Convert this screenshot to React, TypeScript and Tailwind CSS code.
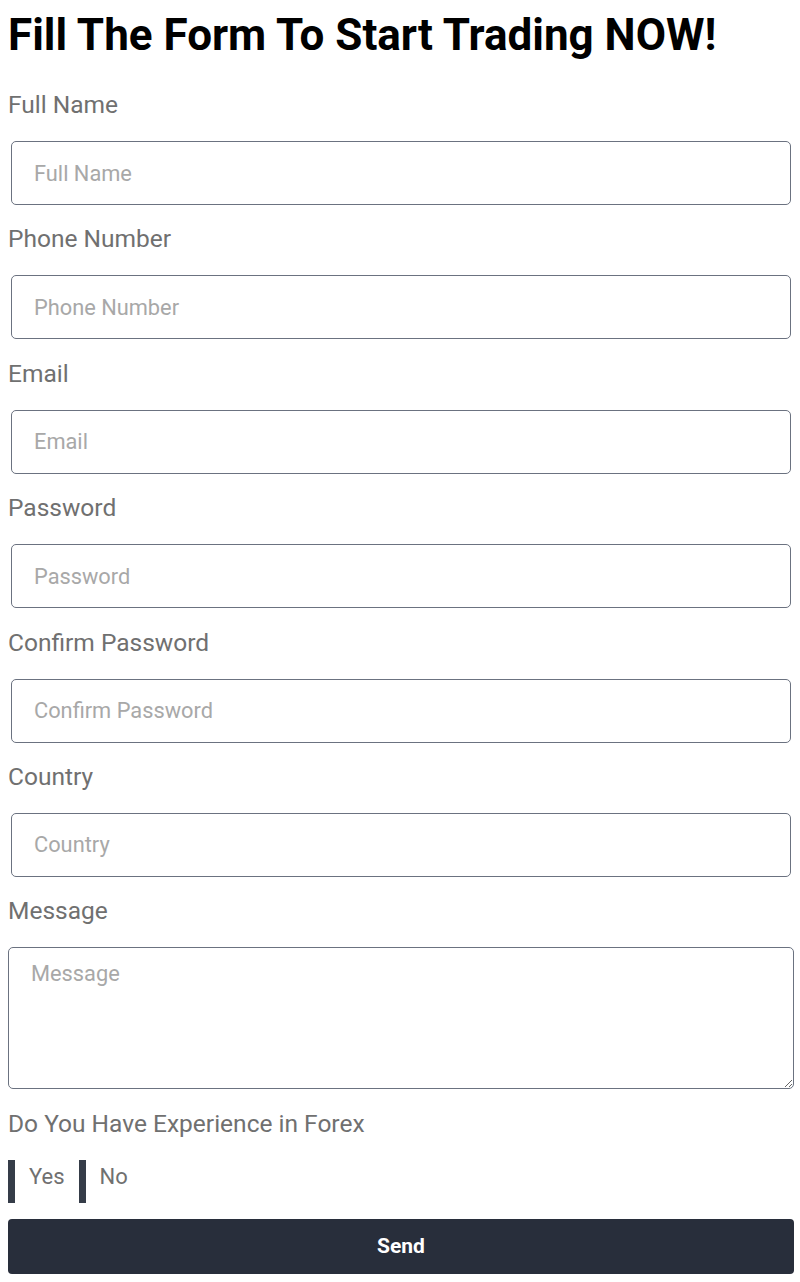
export default function App() {
  const fields = ["Full Name", "Phone Number", "Email", "Password", "Confirm Password", "Country"];

  return (
    <div className="bg-white pl-2 pr-[6px] font-['Roboto',sans-serif]">
      <h1 className="pt-[10px] text-[44px] font-bold leading-[50px] text-black">
        Fill The Form To Start Trading NOW!
      </h1>

      <form className="mt-[30px]" onSubmit={(e) => e.preventDefault()}>
        {fields.map((f) => (
          <div key={f}>
            <label className="block text-[24.5px] leading-[30px] text-[#707070]">{f}</label>
            <input
              type={f.includes("Password") ? "password" : "text"}
              placeholder={f}
              className="mx-[3px] mt-[21px] mb-[19.4px] block h-[64px] w-[780px] rounded-[5px] border border-[#6b7280] px-[22px] text-[21.8px] text-[#333] placeholder:text-[#a8a8a8] outline-none"
            />
          </div>
        ))}

        <label className="block text-[24.5px] leading-[30px] text-[#707070]">Message</label>
        <textarea
          placeholder="Message"
          className="mt-[21px] block h-[142px] w-full rounded-[5px] border border-[#6b7280] px-[22px] pt-[10px] text-[21.8px] placeholder:text-[#a8a8a8] outline-none"
        />

        <p className="mt-[20px] text-[24.5px] leading-[30px] text-[#707070]">Do You Have Experience in Forex</p>

        <div className="mt-[21px] flex">
          {["Yes", "No"].map((o) => (
            <label
              key={o}
              className="flex h-[43px] items-center border-l-[7px] border-[#353c48] pl-[14px] pr-[14px] text-[22px] text-[#707070]"
            >
              <span className="-mt-[10px]">{o}</span>
            </label>
          ))}
        </div>

        <button
          type="submit"
          className="mt-[16px] block h-[55px] w-full rounded-[4px] bg-[#282e3b] text-[21px] font-bold text-white"
        >
          Send
        </button>
      </form>
    </div>
  );
}
